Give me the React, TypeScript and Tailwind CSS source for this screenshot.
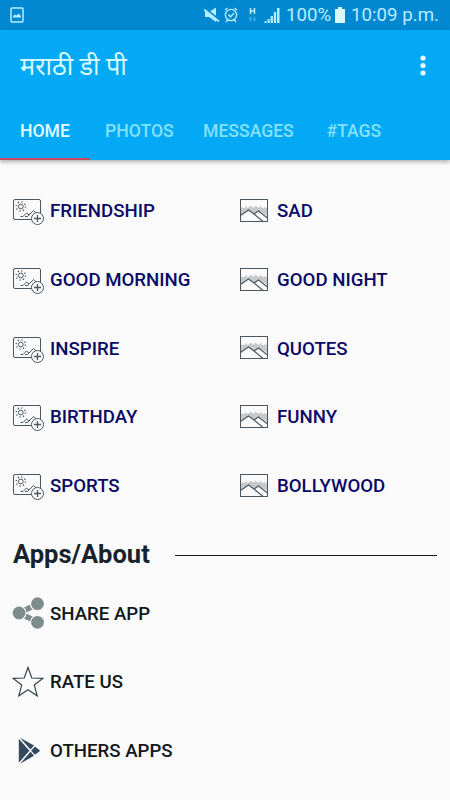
const categories = [
  ['FRIENDSHIP', 'SAD'],
  ['GOOD MORNING', 'GOOD NIGHT'],
  ['INSPIRE', 'QUOTES'],
  ['BIRTHDAY', 'FUNNY'],
  ['SPORTS', 'BOLLYWOOD'],
];

function AddPhotoIcon() {
  return (
    <svg viewBox="0 0 32 28" className="w-8 h-7 mt-[3px] shrink-0" fill="none" stroke="#4a5761" strokeWidth="1">
      <rect x="1.5" y="1.5" width="27" height="20" rx="1.5" />
      <circle cx="8.8" cy="8.5" r="2.4" />
      <circle cx="8.8" cy="8.5" r="4.6" strokeWidth="1.4" strokeDasharray="1.2 2.41" />
      <path d="M8.5 18.5 H11 L14.5 15 L17 17 L21.5 12.5 L26 16.5 M13 18.5 H15.5 L18.5 15.5" />
      <circle cx="25.5" cy="20.5" r="6" fill="#fafafa" />
      <path d="M22 20.5 H29 M25.5 17 V24" strokeWidth="1.3" />
    </svg>
  );
}

function LandscapeIcon() {
  return (
    <svg viewBox="0 0 30 26" className="w-[30px] h-[26px] shrink-0">
      <path
        d="M1.5 11.5 L3 10 L5 11 L7 9 L9 10.5 L12 8.5 L14 10.5 L17 8.5 L19 10.5 L22 9 L24 11 L26 10 L28.5 11.5 V18 L20 13 L15 16 L9 12 L1.5 18 Z"
        fill="#c6cacc"
      />
      <path
        d="M1.5 11 L3 9.5 L5 11 L7 8.5 L9 10.5 L12 8 L14 10.5 L17 8 L19 10.5 L22 8.5 L24 11 L26 9.5 L28.5 11"
        fill="none"
        stroke="#9ba2a6"
        strokeWidth="0.8"
        strokeDasharray="1.5 1"
      />
      <path d="M1.5 17.5 L9.5 12 L15 16 L19.5 13 L28.5 18.5 V23.5 H1.5 Z" fill="#fafafa" />
      <path
        d="M1.5 17.5 L9.5 12 L15 16 M15 16 L19.5 13 L28.5 20 M15 16 L24 23.5"
        fill="none"
        stroke="#4a5761"
        strokeWidth="1.1"
      />
      <rect x="1.5" y="1.5" width="27" height="22" fill="none" stroke="#4a5761" />
    </svg>
  );
}

function ShareIcon() {
  return (
    <svg viewBox="0 0 32 32" className="w-8 h-8" fill="#7f8c8d">
      <path d="M7 16 L25.5 7 M7 16 L25.5 25" stroke="#7f8c8d" strokeWidth="5.5" />
      <g stroke="#fafafa" strokeWidth="1.2">
        <circle cx="7" cy="16" r="7" />
        <circle cx="25.5" cy="6.7" r="7" />
        <circle cx="25.5" cy="25.3" r="7" />
      </g>
    </svg>
  );
}

function StarIcon() {
  return (
    <svg viewBox="0 0 32 32" className="w-8 h-8" fill="none" stroke="#35434d" strokeWidth="1.2">
      <path d="M16 1.5 L19.8 12 L30.8 12.4 L22.3 19.1 L25.2 29.8 L16 23.8 L6.8 29.8 L9.7 19.1 L1.2 12.4 L12.2 12 Z" />
    </svg>
  );
}

function PlayStoreIcon() {
  return (
    <svg viewBox="0 0 32 32" className="w-8 h-8" fill="#34495e">
      <path d="M6.8 3.7 L17.4 15.7 L6.8 27.7 Z" />
      <path d="M8 2.7 L22 10.6 L18.5 14.6 Z" />
      <path d="M8 28.7 L22 20.8 L18.5 16.8 Z" />
      <path d="M23 11.6 L28.2 15.7 L23 19.8 L19.2 15.7 Z" />
    </svg>
  );
}

const aboutItems = [
  { label: 'SHARE APP', Icon: ShareIcon },
  { label: 'RATE US', Icon: StarIcon },
  { label: 'OTHERS APPS', Icon: PlayStoreIcon },
];

function StatusBar() {
  return (
    <div className="h-[30px] bg-[#0288d1] flex items-center justify-between pl-[10px] pr-[11px] text-[#b5edff]">
      <svg viewBox="0 0 14 16" className="w-[14px] h-4" fill="none" stroke="currentColor" strokeWidth="1.5">
        <rect x="1" y="1" width="12" height="14" rx="1" />
        <path d="M3 10.5 V9 L5 7.5 L6.5 8.5 L8.5 6.5 L11 9 V10.5 Z" fill="currentColor" stroke="none" />
      </svg>
      <div className="flex items-center">
        <svg viewBox="0 0 78 20" className="w-[78px] h-5" fill="currentColor">
          <path d="M1 7 H5 L12 2.5 V17 L5 12 H1 Z" />
          <path d="M0 2.5 L15 14.5" stroke="#0288d1" strokeWidth="2" />
          <path d="M0 4.5 L15 16.5" stroke="currentColor" strokeWidth="2" />
          <g fill="none" stroke="currentColor" strokeWidth="1.4">
            <circle cx="27" cy="10" r="5.6" />
            <path d="M21 5 L23.5 3 M33 5 L30.5 3 M24.5 9.5 L26.5 12 L30 8 M23.5 15 L22 17 M30.5 15 L32 17" />
          </g>
          <path d="M46.5 3 V9 M50.5 3 V9 M46.5 6 H50.5" stroke="currentColor" strokeWidth="1.5" />
          <g fill="#45abe0">
            <path d="M44.5 13.5 L46.5 11.5 L48.5 13.5 H47.2 V16.5 H45.8 V13.5 Z" />
            <path d="M48.5 14.5 L50.5 16.5 L52.5 14.5 H51.2 V11.5 H49.8 V14.5 Z" />
          </g>
          <path d="M60.5 16 H62.5 V18 H60.5 Z M63.5 14 H65.7 V18 H63.5 Z M66.6 11 H68.9 V18 H66.6 Z M69.8 7 H72.1 V18 H69.8 Z M73 3 H75.5 V18 H73 Z" />
        </svg>
        <span className="ml-[4px] w-[45px] text-[18.7px] leading-[30px] whitespace-nowrap">100%</span>
        <svg viewBox="0 0 10 16" className="w-[10px] h-4 ml-[4px] mr-[6px]" fill="#d9f7ff">
          <path d="M3 0 H7 V2 H10 V16 H0 V2 H3 Z" />
        </svg>
        <span className="text-[18.7px] leading-[30px] whitespace-nowrap">10:09 p.m.</span>
      </div>
    </div>
  );
}

function AppBar() {
  return (
    <header className="relative z-10 h-[130px] bg-[#03a9f4] shadow-[0_2px_4px_rgba(0,0,0,0.3)]">
      <div className="h-[72px] pl-5 pr-[24px] flex items-center justify-between">
        <h1 className="pt-[2px] text-[25.3px] leading-8 text-[#d9faff]">मराठी डी पी</h1>
        <svg viewBox="0 0 6 22" className="w-[6px] h-[22px]" fill="#e5fcff">
          <circle cx="3" cy="3" r="2.6" />
          <circle cx="3" cy="10.5" r="2.6" />
          <circle cx="3" cy="18" r="2.6" />
        </svg>
      </div>
      <nav className="h-[58px] flex text-[17.6px] leading-[58px] font-medium text-[#83e1ff] whitespace-nowrap">
        <span className="w-[90px] pl-5 text-[#e0fbff] border-b-2 border-[#c3475f]">HOME</span>
        <span className="w-[98px] pl-[15px]">PHOTOS</span>
        <span className="w-[123.5px] pl-[15px]">MESSAGES</span>
        <span className="pl-[15px]">#TAGS</span>
      </nav>
    </header>
  );
}

export default function App() {
  return (
    <div className="w-[450px] h-[800px] overflow-hidden bg-[#fafafa] font-['Roboto','Noto_Sans',sans-serif]">
      <StatusBar />
      <AppBar />
      <main className="pt-[16.5px] text-[18.65px] leading-7 font-medium whitespace-nowrap">
        {categories.map(([left, right]) => (
          <div key={left} className="h-[68.7px] flex items-center text-[#0a0a66]">
            <div className="w-[239px] pl-3 flex items-center">
              <AddPhotoIcon />
              <span className="ml-[6px] pt-px">{left}</span>
            </div>
            <div className="flex items-center">
              <LandscapeIcon />
              <span className="ml-2 pt-px">{right}</span>
            </div>
          </div>
        ))}
        <div className="h-[59px] pt-[10px] pl-[13px] pr-[13px] flex items-center">
          <h2 className="w-[162px] text-[25.5px] leading-8 font-bold text-[#17232b]">Apps/About</h2>
          <div className="flex-1 h-px mt-[2px] bg-[#16181a]" />
        </div>
        {aboutItems.map(({ label, Icon }) => (
          <div key={label} className="h-[68.7px] pl-3 flex items-center text-[#11171a]">
            <Icon />
            <span className="ml-[6px] pt-px">{label}</span>
          </div>
        ))}
      </main>
    </div>
  );
}
